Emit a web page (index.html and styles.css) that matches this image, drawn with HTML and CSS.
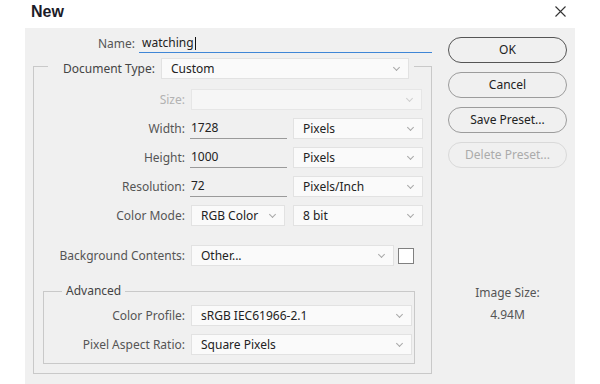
FILE: index.html
```html
<!DOCTYPE html>
<html>
<head>
<meta charset="utf-8">
<link rel="stylesheet" href="styles.css">
</head>
<body>
<div class="titlebar">
  <h1 class="title">New</h1>
  <svg class="close" width="11" height="11" viewBox="0 0 11 11"><path d="M0.5 0.5 L10.5 10.5 M10.5 0.5 L0.5 10.5" stroke="#333" stroke-width="1.1" fill="none"/></svg>
</div>
<div class="panel">
  <div class="form">
    <div class="name-row">
      <span class="name-label">Name:</span>
      <div class="name-input">watching<span class="caret"></span></div>
    </div>
    <fieldset class="doc">
      <legend class="doc-legend">
        <span class="legend-label">Document Type:</span>
        <div class="select w-doc">Custom</div>
      </legend>
      <div class="rows">
        <div class="row"><span class="lbl disabled">Size:</span><div class="select disabled w-size"></div></div>
        <div class="row"><span class="lbl">Width:</span><div class="num">1728</div><div class="select w-unit">Pixels</div></div>
        <div class="row"><span class="lbl">Height:</span><div class="num">1000</div><div class="select w-unit">Pixels</div></div>
        <div class="row"><span class="lbl">Resolution:</span><div class="num">72</div><div class="select w-unit">Pixels/Inch</div></div>
        <div class="row"><span class="lbl">Color Mode:</span><div class="select w-mode">RGB Color</div><div class="select w-unit w-bit">8 bit</div></div>
      </div>
      <div class="row bg-row"><span class="lbl">Background Contents:</span><div class="select w-bg">Other...</div><div class="swatch"></div></div>
      <fieldset class="adv">
        <legend class="adv-legend">Advanced</legend>
        <div class="adv-rows">
          <div class="row adv-row"><span class="lbl">Color Profile:</span><div class="select w-adv">sRGB IEC61966-2.1</div></div>
          <div class="row adv-row"><span class="lbl">Pixel Aspect Ratio:</span><div class="select w-adv">Square Pixels</div></div>
        </div>
      </fieldset>
    </fieldset>
  </div>
  <div class="side">
    <div class="buttons">
      <div class="btn btn-default">OK</div>
      <div class="btn">Cancel</div>
      <div class="btn">Save Preset...</div>
      <div class="btn btn-disabled">Delete Preset...</div>
    </div>
    <div class="imgsize">
      <div class="imgsize-label">Image Size:</div>
      <div class="imgsize-value">4.94M</div>
    </div>
  </div>
</div>
</body>
</html>
```
FILE: styles.css
```css
* { box-sizing: border-box; }
body {
  margin: 0;
  width: 600px;
  height: 384px;
  overflow: hidden;
  background: #ffffff;
  font-family: "Noto Sans", "Open Sans", sans-serif;
  font-size: 12px;
  color: #333;
}
.titlebar {
  height: 28px;
  display: flex;
  justify-content: space-between;
  align-items: flex-start;
  padding: 0 34px 0 31px;
}
.title {
  margin: 3px 0 0 0;
  font-family: "Liberation Sans", Arial, sans-serif;
  font-weight: bold;
  font-size: 16px;
  color: #1c1c28;
}
.close { margin-top: 6px; }
.panel {
  margin-left: 25px;
  width: 550px;
  height: 356px;
  background: #f0f0f0;
  display: flex;
}
.form {
  margin-left: 8px;
  width: 399px;
}
.name-row {
  display: flex;
  align-items: flex-end;
  height: 25px;
}
.name-label {
  width: 102px;
  text-align: right;
  color: #555;
  line-height: 18px;
}
.name-input {
  margin-left: 4px;
  width: 293px;
  height: 19px;
  border-bottom: 1px solid #3f86d6;
  padding-left: 3px;
  line-height: 18px;
  color: #222;
  display: flex;
  align-items: center;
}
.caret {
  display: inline-block;
  width: 1px;
  height: 13px;
  background: #111;
  margin-left: 1px;
}
fieldset {
  margin: 0;
  padding: 0;
  min-inline-size: 0;
  border: 1px solid #c9c9c9;
}
.doc {
  margin-top: 5px;
  width: 399px;
  height: 316px;
  display: block;
}
.doc-legend {
  display: flex;
  align-items: flex-start;
  margin-left: 14px;
  padding: 0 5px 0 15px;
  height: 16px;
}
.legend-label {
  color: #444;
  line-height: 21px;
  margin-right: 6px;
}
.select {
  position: relative;
  height: 21px;
  line-height: 20px;
  background: #fafafa;
  border: 1px solid #e2e2e2;
  padding-left: 9px;
  color: #222;
}
.select::after {
  content: "";
  position: absolute;
  right: 9px;
  top: 6px;
  width: 4px;
  height: 4px;
  border-right: 1px solid #a8a8a8;
  border-bottom: 1px solid #a8a8a8;
  transform: rotate(45deg);
}
.select.disabled { background: #f6f6f6; border-color: #e6e6e6; }
.select.disabled::after { border-color: #cfcfcf; }
.w-doc { width: 248px; }
.rows {
  display: flex;
  flex-direction: column;
  gap: 8px;
  padding-top: 15px;
}
.row {
  display: flex;
  align-items: center;
  height: 21px;
}
.lbl {
  width: 151px;
  text-align: right;
  color: #555;
  margin-right: 6px;
  flex: none;
}
.lbl.disabled { color: #b2b2b2; }
.w-size { width: 231px; }
.num {
  width: 97px;
  height: 20px;
  line-height: 18px;
  border-bottom: 1px solid #9a9a9a;
  padding-left: 1px;
  color: #222;
  margin-left: -1px;
  margin-right: 6px;
}
.w-unit { width: 130px; }
.w-mode { width: 94px; margin-right: 8px; }
.bg-row { margin-top: 19px; }
.w-bg { width: 203px; }
.swatch {
  width: 16px;
  height: 16px;
  margin-left: 4px;
  background: #fff;
  border: 1px solid #808080;
}
.adv {
  margin: 17px 16px 0 9px;
  height: 81px;
}
.adv-legend {
  margin-left: 18px;
  padding: 0 4px;
  color: #444;
  line-height: 16px;
}
.adv-rows {
  display: flex;
  flex-direction: column;
  gap: 8px;
  padding-top: 6px;
}
.adv-row .lbl { width: 141px; }
.w-adv { width: 221px; }
.side {
  margin-left: 16px;
  width: 119px;
  display: flex;
  flex-direction: column;
}
.buttons {
  display: flex;
  flex-direction: column;
  gap: 9px;
  padding-top: 9px;
}
.btn {
  height: 26px;
  border: 1px solid #9c9c9c;
  border-radius: 13px;
  text-align: center;
  line-height: 24px;
  color: #222;
}
.btn-default { border-color: #555; }
.btn-disabled { border-color: #d9d9d9; color: #ababab; }
.imgsize {
  margin-top: 114px;
  text-align: center;
  color: #555;
  line-height: 22px;
}
```
